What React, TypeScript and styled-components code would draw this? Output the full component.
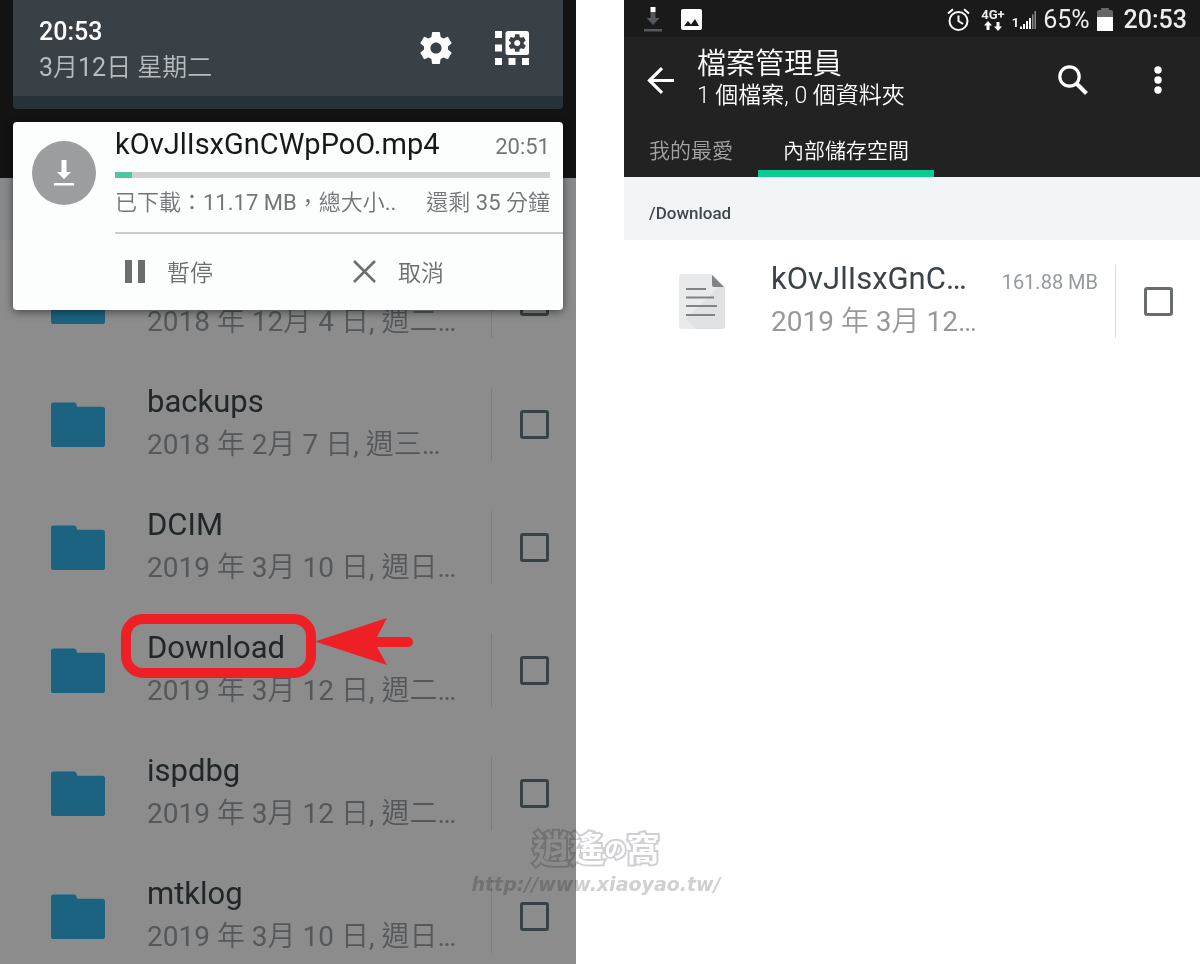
import React from "react";
import styled, { createGlobalStyle } from "styled-components";

const GlobalStyle = createGlobalStyle`
  * { box-sizing: border-box; }
  body {
    margin: 0;
    background: #fff;
    font-family: Roboto, "Noto Sans CJK TC DemiLight", "Noto Sans CJK TC", sans-serif;
  }
  button {
    border: 0;
    padding: 0;
    background: none;
    color: inherit;
    font: inherit;
    cursor: pointer;
  }
  svg { display: block; flex: none; }
`;

const Page = styled.main`
  position: relative;
  display: grid;
  grid-template-columns: 1fr 1fr;
  column-gap: 48px;
  height: 100vh;
  overflow: hidden;
`;

const Phone = styled.section<{ $dimmed?: boolean }>`
  position: relative;
  display: flex;
  flex-direction: column;
  min-width: 0;
  min-height: 0;
  overflow: hidden;
  background: ${(p) => (p.$dimmed ? "#8c8c8c" : "#fff")};
`;

/* Dimmed app behind the notification shade */
const DimmedBar = styled.div`
  flex: none;
  height: 178px;
  background: #131313;
`;

const PathBar = styled.div<{ $dimmed?: boolean }>`
  flex: none;
  display: flex;
  align-items: center;
  height: ${(p) => (p.$dimmed ? 62 : 63)}px;
  padding: 8px 25px 0;
  background: ${(p) => (p.$dimmed ? "#868889" : "#f2f5f7")};
  color: #3f484d;
  font-size: 17px;
  font-weight: 500;
`;

const List = styled.ul`
  flex: 1;
  min-height: 0;
  margin: 0;
  padding: 0;
  overflow: hidden;
  list-style: none;
`;

const Row = styled.li`
  display: flex;
  align-items: center;
  height: 123px;
  padding-right: 27px;
`;

const RowIcon = styled.div`
  flex: none;
  display: flex;
  justify-content: center;
  width: 147px;
  padding-left: 9px;
`;

const RowText = styled.div<{ $dimmed?: boolean }>`
  flex: 1;
  min-width: 0;
  color: ${(p) => (p.$dimmed ? "#212629" : "#3a4347")};
`;

const NameLine = styled.div`
  display: flex;
  align-items: baseline;
  justify-content: space-between;
  height: 42px;
  padding-right: 17px;
`;

const Name = styled.span`
  position: relative;
  font-size: 31px;
  line-height: 40px;
  white-space: nowrap;
`;

const DateLine = styled.div<{ $dimmed?: boolean }>`
  height: 44px;
  font-size: 28px;
  line-height: 42px;
  white-space: nowrap;
  color: ${(p) => (p.$dimmed ? "#55585b" : "#96999b")};
`;

const FileSize = styled.span`
  font-size: 20px;
  color: #96999b;
  white-space: nowrap;
`;

const CheckCell = styled.label<{ $dimmed?: boolean }>`
  flex: none;
  display: flex;
  align-items: center;
  height: 73px;
  padding-left: 28px;
  border-left: 1px solid ${(p) => (p.$dimmed ? "#7b7d80" : "#dcdfe1")};
`;

const Checkbox = styled.input<{ $dimmed?: boolean }>`
  appearance: none;
  width: 29px;
  height: 29px;
  margin: 0;
  border: 3px solid ${(p) => (p.$dimmed ? "#384246" : "#6a6d70")};
  border-radius: 3px;
`;

const Highlight = styled.span`
  position: absolute;
  top: -14px;
  left: -26px;
  width: 195px;
  height: 64px;
  border: 10px solid #ef1f26;
  border-radius: 22px;
`;

const HighlightArrow = styled.svg`
  position: absolute;
  top: -10px;
  left: 168px;
`;

/* Notification shade */
const Shade = styled.div`
  position: absolute;
  inset: 0 13px auto 13px;
  display: flex;
  flex-direction: column;
  gap: 13px;
`;

const ShadeHeader = styled.header`
  display: flex;
  align-items: center;
  height: 109px;
  padding: 0 34px 13px 26px;
  border-bottom: 13px solid #273238;
  border-radius: 0 0 4px 4px;
  background: #394147;
`;

const Clock = styled.div`
  flex: 1;
  padding-top: 16px;
  color: #fff;
  font-size: 25px;
  font-weight: 500;
  line-height: 36px;
`;

const Today = styled.div`
  color: #b9bcbe;
  font-weight: 400;
`;

const HeaderActions = styled.div`
  display: flex;
  align-items: center;
  gap: 43px;
  padding-top: 13px;
`;

const Card = styled.article`
  display: grid;
  grid-template-columns: 102px 1fr;
  height: 188px;
  border-radius: 4px;
  background: #fcfdfd;
  box-shadow: 0 2px 8px rgba(0, 0, 0, 0.5);
`;

const Badge = styled.div`
  display: flex;
  align-items: center;
  justify-content: center;
  width: 64px;
  height: 64px;
  margin: 19px;
  border-radius: 50%;
  background: #9c9d9e;
`;

const CardBody = styled.div`
  min-width: 0;
  display: flex;
  flex-direction: column;
`;

const CardLine = styled.div`
  display: flex;
  align-items: baseline;
  justify-content: space-between;
  padding-right: 13px;
  color: #737577;
  font-size: 22px;
  line-height: 50px;
  white-space: nowrap;
`;

const CardTitle = styled.h2`
  margin: 0;
  height: 48px;
  color: #16181a;
  font-size: 29px;
  font-weight: 400;
  line-height: 44px;
`;

const Progress = styled.progress`
  appearance: none;
  display: block;
  flex: none;
  width: calc(100% - 13px);
  height: 6px;
  border: 0;
  &::-webkit-progress-bar { background: #cfd0d2; }
  &::-webkit-progress-value { background: #4fc5a3; }
`;

const Actions = styled.div`
  flex: 1;
  display: grid;
  grid-template-columns: 228px 1fr;
  margin-top: 4px;
  padding-bottom: 2px;
  border-top: 2px solid #c9cbcd;
`;

const Action = styled.button`
  && {
    display: flex;
    align-items: center;
    gap: 22px;
    padding-left: 10px;
    color: #6b6d6f;
    font-size: 23px;
  }
`;

/* File manager */
const TopBar = styled.header`
  flex: none;
  background: #222;
  color: #fff;
`;

const StatusBar = styled.div`
  display: flex;
  align-items: center;
  justify-content: space-between;
  height: 37px;
  padding: 2px 13px 0 20px;
  background: #1a1a1a;
  font-size: 25px;
  color: #ededed;
`;

const StatusGroup = styled.div<{ $gap: number }>`
  display: flex;
  align-items: center;
  gap: ${(p) => p.$gap}px;
`;

const StatusClock = styled.span`
  margin-left: 4px;
  font-weight: 500;
`;

const Network = styled.span`
  display: flex;
  flex-direction: column;
  align-items: center;
  padding-left: 4px;
  font-size: 13px;
  font-weight: 700;
  line-height: 12px;
`;

const Signal = styled.span`
  display: flex;
  align-items: flex-end;
  gap: 1px;
  font-size: 13px;
  font-weight: 700;
  line-height: 12px;
`;

const TitleRow = styled.div`
  display: flex;
  align-items: center;
  height: 86px;
  padding: 0 38px 0 23px;
`;

const Titles = styled.div`
  flex: 1;
  padding: 0 0 3px 23px;
`;

const Title = styled.h1`
  margin: 0;
  font-size: 29px;
  font-weight: 400;
  line-height: 34px;
`;

const Subtitle = styled.p`
  margin: 0;
  font-size: 23px;
  font-weight: 300;
  line-height: 30px;
`;

const TitleActions = styled.div`
  display: flex;
  align-items: center;
  gap: 66px;
`;

const Tabs = styled.nav`
  display: flex;
  height: 54px;
`;

const Tab = styled.button<{ $active?: boolean }>`
  && {
    padding: 10px 25px 0;
    border-bottom: 7px solid ${(p) => (p.$active ? "#0dca93" : "transparent")};
    color: ${(p) => (p.$active ? "#fff" : "#a3a3a3")};
    font-size: 21px;
    line-height: 37px;
  }
`;

/* Site mark drawn across both screens */
const Watermark = styled.div`
  position: absolute;
  bottom: 70px;
  left: calc(50% - 4px);
  display: flex;
  flex-direction: column;
  align-items: center;
  transform: translateX(-50%);
  mix-blend-mode: multiply;
  white-space: nowrap;
`;

const MarkName = styled.span`
  display: flex;
  align-items: center;
  color: #fff;
  font-family: "Noto Sans CJK TC", sans-serif;
  font-weight: 700;
  line-height: 54px;
  -webkit-text-stroke: 4px #cfd0d4;
  paint-order: stroke fill;
`;

const MarkGlyph = styled.span<{ $size: number }>`
  font-size: ${(p) => p.$size}px;
`;

const MarkUrl = styled.span`
  color: #cfd0d4;
  font-family: "DejaVu Sans", sans-serif;
  font-size: 19px;
  font-style: italic;
  font-weight: 700;
  line-height: 20px;
`;

const GEAR =
  "M19.43 12.98c.04-.32.07-.64.07-.98s-.03-.66-.07-.98l2.11-1.65c.19-.15.24-.42.12-.64l-2-3.46c-.12-.22-.39-.3-.61-.22l-2.49 1c-.52-.4-1.08-.73-1.69-.98l-.38-2.65C14.46 2.18 14.25 2 14 2h-4c-.25 0-.46.18-.49.42l-.38 2.65c-.61.25-1.17.59-1.69.98l-2.49-1c-.23-.09-.49 0-.61.22l-2 3.46c-.13.22-.07.49.12.64l2.11 1.65c-.04.32-.07.65-.07.98s.03.66.07.98l-2.11 1.65c-.19.15-.24.42-.12.64l2 3.46c.12.22.39.3.61.22l2.49-1c.52.4 1.08.73 1.69.98l.38 2.65c.03.24.24.42.49.42h4c.25 0 .46-.18.49-.42l.38-2.65c.61-.25 1.17-.59 1.69-.98l2.49 1c.23.09.49 0 .61-.22l2-3.46c.12-.22.07-.49-.12-.64l-2.11-1.65zM12 15.5c-1.93 0-3.5-1.57-3.5-3.5s1.57-3.5 3.5-3.5 3.5 1.57 3.5 3.5-1.57 3.5-3.5 3.5z";

const GearIcon = () => (
  <svg width="32" height="32" viewBox="2 2 20 20" fill="#fff"><path d={GEAR} /></svg>
);

const QuickSettingsIcon = () => (
  <svg width="34" height="34" viewBox="0 0 34 34" fill="#fff">
    <path d="M0 0h7v7H0zM0 13.5h7v7H0zM0 27h7v7H0zM13.5 27h7v7h-7zM27 27h7v7h-7z" />
    <rect x="10.5" y="0" width="23.5" height="24" rx="2.5" />
    <path d={GEAR} fill="#394147" transform="translate(11.8 1.6) scale(.87)" />
  </svg>
);

const DownloadIcon = () => (
  <svg width="20" height="26" viewBox="0 0 20 26" fill="#fff">
    <path d="M7.500 0h5v12h4.500l-7 7-7-7h4.500zM0 23h20v2.500H0z" />
  </svg>
);

const PauseIcon = () => (
  <svg width="20" height="23" viewBox="0 0 20 23" fill="#6b6d6f"><path d="M0 0h7v23H0zM13 0h7v23h-7z" /></svg>
);

const CloseIcon = () => (
  <svg width="23" height="23" viewBox="0 0 23 23" stroke="#6b6d6f" strokeWidth="2.6"><path d="M1 1l21 21M22 1L1 22" /></svg>
);

const FolderIcon = () => (
  <svg width="54" height="46" viewBox="0 0 55 46" fill="#1b6381">
    <path d="M2.500 0h21c1.500 0 2 .8 2.400 2l.8 2.500h25.800c1.500 0 2.500 1 2.500 2.500v36c0 1.500-1 2.500-2.500 2.500h-50C1 45.500 0 44.500 0 43V2.500C0 1 1 0 2.500 0z" />
  </svg>
);

const DocIcon = () => (
  <svg width="46" height="55" viewBox="0 0 46 55">
    <path d="M3 0h30l13 13v39a3 3 0 0 1-3 3H3a3 3 0 0 1-3-3V3a3 3 0 0 1 3-3z" fill="#e9eaeb" />
    <path d="M46 13v39a3 3 0 0 1-3 3H17L7 45 39 13z" fill="#e0e1e3" />
    <path d="M33 1l12 12H35a2 2 0 0 1-2-2z" fill="#818284" />
    <path d="M7 15h20M7 23.500h28M7 32h31M7 41h29" stroke="#818284" strokeWidth="2" />
  </svg>
);

const StatusDownloadIcon = () => (
  <svg width="18" height="25" viewBox="0 0 18 25" fill="#55595c">
    <path d="M6.500 5h5v6h4l-6.500 7-6.500-7h4zM0 22h18v2.500H0z" />
    <path d="M6.500 0h5v5h-5z" fill="#fff" />
  </svg>
);

const ImageIcon = () => (
  <svg width="21" height="21" viewBox="0 0 21 21">
    <rect width="21" height="21" rx="2" fill="#fff" />
    <path d="M3 17l4-5 3 3.500 4-5.500 4 7z" fill="#1a1a1a" />
  </svg>
);

const AlarmIcon = () => (
  <svg width="23" height="23" viewBox="0 0 23 23" fill="none" stroke="#fff" strokeWidth="2">
    <circle cx="11.500" cy="13" r="9" />
    <path d="M11.500 7.500V13l4.500 3M1 5.500L6 1.200M22 5.500L17 1.200" />
  </svg>
);

const TransferIcon = () => (
  <svg width="18" height="10" viewBox="0 0 18 10" fill="#fff">
    <path d="M4 0l4 4.500H5.500V9h-3V4.500H0zM14 10l-4-4.500h2.500V1h3v4.500H18z" />
  </svg>
);

const SignalIcon = () => (
  <svg width="16" height="18" viewBox="0 0 16 18" fill="#fff">
    <path d="M0 15.500h2V18H0zM3 13h2v5H3zM6 10h2v8H6zM9 7h2v11H9z" />
    <path d="M12 3.500h1.500V18H12zM14.500 0H16v18h-1.500z" fill="#8a8a8a" />
  </svg>
);

const BatteryIcon = () => (
  <svg width="16" height="23" viewBox="0 0 16 23">
    <path d="M4 0h8v2h2a2 2 0 0 1 2 2v5H0V4a2 2 0 0 1 2-2h2z" fill="#666" />
    <path d="M0 9h16v14H0z" fill="#fff" />
  </svg>
);

const BackIcon = () => (
  <svg width="27" height="27" viewBox="0 0 27 27" fill="none" stroke="#fff" strokeWidth="3.200">
    <path d="M27 13.500H3M15 1.200L2.500 13.500 15 25.800" />
  </svg>
);

const SearchIcon = () => (
  <svg width="30" height="30" viewBox="0 0 30 30" fill="none" stroke="#fff">
    <circle cx="11.500" cy="11.500" r="9.700" strokeWidth="3.200" />
    <path d="M18.500 18.500L28.500 28.500" strokeWidth="4" />
  </svg>
);

const MoreIcon = () => (
  <svg width="8" height="28" viewBox="0 0 8 28" fill="#fff">
    <circle cx="4" cy="4" r="3.700" /><circle cx="4" cy="14" r="3.700" /><circle cx="4" cy="24" r="3.700" />
  </svg>
);

const folders = [
  { id: "f0", name: "", date: "2018 年 12月 4 日, 週二…" },
  { id: "f1", name: "backups", date: "2018 年 2月 7 日, 週三…" },
  { id: "f2", name: "DCIM", date: "2019 年 3月 10 日, 週日…" },
  { id: "f3", name: "Download", date: "2019 年 3月 12 日, 週二…", marked: true },
  { id: "f4", name: "ispdbg", date: "2019 年 3月 12 日, 週二…" },
  { id: "f5", name: "mtklog", date: "2019 年 3月 10 日, 週日…" },
];

export default function App() {
  return (
    <>
      <GlobalStyle />
      <Page>
        <Phone $dimmed>
          <DimmedBar />
          <PathBar $dimmed />
          <List>
            {folders.map((f) => (
              <Row key={f.id}>
                <RowIcon><FolderIcon /></RowIcon>
                <RowText $dimmed>
                  <NameLine>
                    <Name id={f.id}>
                      {f.name}
                      {f.marked && (
                        <>
                          <Highlight />
                          <HighlightArrow width="98" height="47" viewBox="0 0 98 47" fill="#ef1f26">
                            <path d="M0 23.500L72 0 62 19h31a5 5 0 0 1 0 10H62l10 18z" />
                          </HighlightArrow>
                        </>
                      )}
                    </Name>
                  </NameLine>
                  <DateLine $dimmed>{f.date}</DateLine>
                </RowText>
                <CheckCell $dimmed>
                  <Checkbox $dimmed type="checkbox" aria-labelledby={f.id} />
                </CheckCell>
              </Row>
            ))}
          </List>
          <Shade>
            <ShadeHeader>
              <Clock>
                20:53
                <Today>3月12日 星期二</Today>
              </Clock>
              <HeaderActions>
                <button type="button" aria-label="設定"><GearIcon /></button>
                <button type="button" aria-label="快速設定"><QuickSettingsIcon /></button>
              </HeaderActions>
            </ShadeHeader>
            <Card>
              <Badge><DownloadIcon /></Badge>
              <CardBody>
                <CardLine>
                  <CardTitle>kOvJlIsxGnCWpPoO.mp4</CardTitle>
                  <time>20:51</time>
                </CardLine>
                <Progress max={100} value={4} />
                <CardLine>
                  <span>已下載：11.17 MB，總大小..</span>
                  <span>還剩 35 分鐘</span>
                </CardLine>
                <Actions>
                  <Action type="button"><PauseIcon />暫停</Action>
                  <Action type="button"><CloseIcon />取消</Action>
                </Actions>
              </CardBody>
            </Card>
          </Shade>
        </Phone>

        <Phone>
          <TopBar>
            <StatusBar>
              <StatusGroup $gap={19}>
                <StatusDownloadIcon />
                <ImageIcon />
              </StatusGroup>
              <StatusGroup $gap={7}>
                <AlarmIcon />
                <Network>4G+<TransferIcon /></Network>
                <Signal>1<SignalIcon /></Signal>
                <span>65%</span>
                <BatteryIcon />
                <StatusClock>20:53</StatusClock>
              </StatusGroup>
            </StatusBar>
            <TitleRow>
              <button type="button" aria-label="返回"><BackIcon /></button>
              <Titles>
                <Title>檔案管理員</Title>
                <Subtitle>1 個檔案, 0 個資料夾</Subtitle>
              </Titles>
              <TitleActions>
                <button type="button" aria-label="搜尋"><SearchIcon /></button>
                <button type="button" aria-label="更多"><MoreIcon /></button>
              </TitleActions>
            </TitleRow>
            <Tabs>
              <Tab type="button">我的最愛</Tab>
              <Tab type="button" $active>內部儲存空間</Tab>
            </Tabs>
          </TopBar>
          <PathBar>/Download</PathBar>
          <List>
            <Row>
              <RowIcon><DocIcon /></RowIcon>
              <RowText>
                <NameLine>
                  <Name id="file">kOvJlIsxGnC…</Name>
                  <FileSize>161.88 MB</FileSize>
                </NameLine>
                <DateLine>2019 年 3月 12…</DateLine>
              </RowText>
              <CheckCell>
                <Checkbox type="checkbox" aria-labelledby="file" />
              </CheckCell>
            </Row>
          </List>
        </Phone>

        <Watermark>
          <MarkName>
            <MarkGlyph $size={37}>逍</MarkGlyph>
            <MarkGlyph $size={35}>遙</MarkGlyph>
            <MarkGlyph $size={22}>の</MarkGlyph>
            <MarkGlyph $size={33}>窩</MarkGlyph>
          </MarkName>
          <MarkUrl>http://www.xiaoyao.tw/</MarkUrl>
        </Watermark>
      </Page>
    </>
  );
}
